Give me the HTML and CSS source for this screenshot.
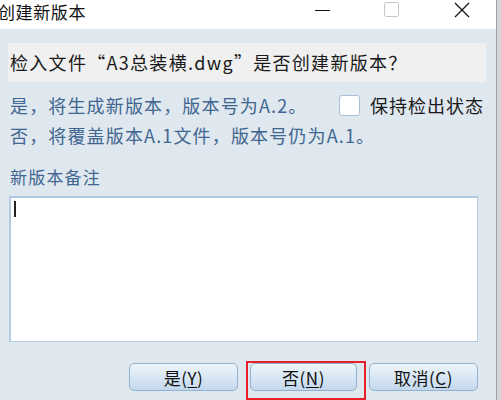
FILE: index.html
```html
<!DOCTYPE html>
<html lang="zh-CN">
<head>
  <meta charset="UTF-8">
  <title>创建新版本</title>
  <link rel="stylesheet" href="styles.css">
</head>
<body>
  <div class="dialog">
    <!-- Title bar -->
    <div class="title-bar">
      <span class="title">创建新版本</span>
      <div class="win-controls">
        <span class="ctl ctl-min">
          <svg width="16" height="16" viewBox="0 0 16 16"><line x1="1" y1="8.5" x2="16" y2="8.5" stroke="#111" stroke-width="1"/></svg>
        </span>
        <span class="ctl ctl-max">
          <svg width="16" height="16" viewBox="0 0 16 16"><rect x="0.5" y="0.5" width="14" height="14" rx="2" fill="none" stroke="#c4c4c4" stroke-width="1"/></svg>
        </span>
        <span class="ctl ctl-close">
          <svg width="16" height="16" viewBox="0 0 16 16"><path d="M1 1 L15 15 M15 1 L1 15" stroke="#111" stroke-width="1.2" fill="none"/></svg>
        </span>
      </div>
    </div>

    <div class="content">
      <div class="question">检入文件“A3总装横.dwg”是否创建新版本？</div>

      <div class="info-row first-row">
        <span class="info">是，将生成新版本，版本号为A.2。</span>
        <label class="keep-checkout">
          <span class="checkbox"></span>
          <span>保持检出状态</span>
        </label>
      </div>
      <div class="info-row">
        <span class="info">否，将覆盖版本A.1文件，版本号仍为A.1。</span>
      </div>

      <div class="note-label">新版本备注</div>
      <div class="note-box"><span class="caret"></span></div>

      <div class="buttons">
        <button class="btn">是(<u>Y</u>)</button>
        <button class="btn btn-marked">否(<u>N</u>)</button>
        <button class="btn">取消(<u>C</u>)</button>
      </div>
    </div>
  </div>
  <div class="side-strip"></div>
</body>
</html>
```

FILE: styles.css
```css
body {
  margin: 0;
  width: 501px;
  height: 400px;
  overflow: hidden;
  display: flex;
  font-family: "Noto Sans CJK SC", "DejaVu Sans", sans-serif;
  background: #dfe7ef;
}

.dialog {
  width: 496px;
  height: 400px;
  display: flex;
  flex-direction: column;
  background: #dfe7ef;
}

.side-strip {
  width: 5px;
  height: 400px;
  background: #d2d5d8;
  border-left: 1px solid #9ea3a8;
  box-sizing: border-box;
}

/* title bar */
.title-bar {
  height: 29px;
  background: #ffffff;
  display: flex;
  align-items: center;
  justify-content: space-between;
}

.title {
  margin-left: -2px;
  margin-top: -6px;
  font-size: 17px;
  color: #111;
  letter-spacing: 0.6px;
}

.win-controls {
  display: flex;
  align-items: center;
  margin-top: -10px;
}

.ctl {
  display: flex;
  width: 16px;
  height: 16px;
}

.ctl-min {
  margin-right: 54px;
}

.ctl-max {
  margin-right: 54px;
}

.ctl-close {
  margin-right: 26px;
}

/* content */
.content {
  padding: 14px 18px 0 8px;
  display: flex;
  flex-direction: column;
}

.question {
  height: 39px;
  background: #f0f0f0;
  padding-left: 2px;
  font-size: 18px;
  line-height: 39px;
  color: #1a1a1a;
  letter-spacing: 1.3px;
  margin-right: -8px;
}

.info-row {
  height: 30px;
  display: flex;
  align-items: center;
  justify-content: space-between;
  padding-left: 2px;
}

.first-row {
  margin-top: 8px;
}

.info {
  font-size: 18px;
  color: #3f6690;
  letter-spacing: 1.15px;
}

.keep-checkout {
  display: flex;
  align-items: center;
  gap: 10px;
  font-size: 18px;
  color: #1a1a1a;
  letter-spacing: 1px;
  margin-right: -6px;
}

.checkbox {
  width: 19px;
  height: 19px;
  background: #ffffff;
  border: 1px solid #a9bfd6;
  border-radius: 3px;
}

.note-label {
  margin-top: 14px;
  padding-left: 2px;
  font-size: 17px;
  color: #3f6690;
  letter-spacing: 1.2px;
  line-height: 26px;
}

.note-box {
  margin-top: 6px;
  margin-left: 1px;
  background: #ffffff;
  border: 2px solid #b0cbe3;
  border-right-width: 1px;
  border-bottom-width: 1px;
  padding: 3px 0 0 3px;
  box-sizing: border-box;
  height: 146px;
}

.caret {
  display: block;
  width: 2px;
  height: 16px;
  background: #222;
}

.buttons {
  margin-top: 21px;
  display: flex;
  justify-content: flex-end;
  gap: 12px;
}

.btn {
  position: relative;
  width: 109px;
  height: 28px;
  padding: 0;
  border: 1px solid #8fb1d2;
  border-radius: 5px;
  background: linear-gradient(#eef4fa, #d9e7f4 50%, #c3d8ec);
  font-family: "Noto Sans CJK SC", "DejaVu Sans", sans-serif;
  font-size: 17px;
  color: #111;
  letter-spacing: 0.5px;
}

.btn-marked {
  width: 107px;
}

.btn u {
  text-underline-offset: 2px;
}

/* red highlight drawn around the "No" button */
.btn-marked::after {
  content: '';
  position: absolute;
  left: -5px;
  right: -10px;
  top: -3px;
  bottom: -10px;
  border: 2px solid #e8202a;
}
```
